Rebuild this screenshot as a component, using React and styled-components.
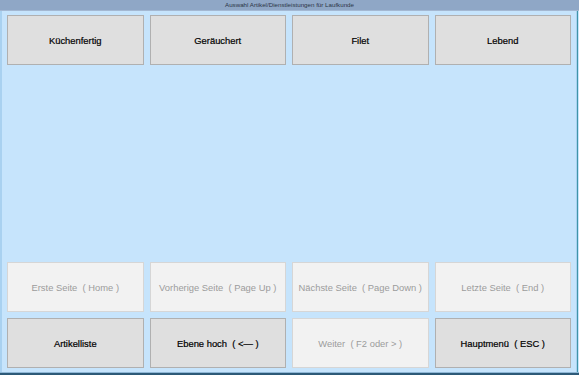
import React from "react";
import styled, { createGlobalStyle } from "styled-components";

const GlobalStyle = createGlobalStyle`
  html, body {
    margin: 0;
    padding: 0;
    background: #c6e4fc;
  }
`;

const topItems = ["Küchenfertig", "Geräuchert", "Filet", "Lebend"];

const pageItems = [
  { label: "Erste Seite  ( Home )", disabled: true },
  { label: "Vorherige Seite  ( Page Up )", disabled: true },
  { label: "Nächste Seite  ( Page Down )", disabled: true },
  { label: "Letzte Seite  ( End )", disabled: true },
  { label: "Artikelliste" },
  { label: "Ebene hoch  ( <— )" },
  { label: "Weiter  ( F2 oder > )", disabled: true },
  { label: "Hauptmenü  ( ESC )" },
];

const App = () => {
  return (
    <>
      <GlobalStyle />
      <Window>
        <TitleBar>Auswahl Artikel/Dienstleistungen für Laufkunde</TitleBar>
        <Body>
          <ButtonGrid>
            {topItems.map((item) => (
              <TileButton key={item}>{item}</TileButton>
            ))}
          </ButtonGrid>
          <ButtonGrid>
            {pageItems.map((item) => (
              <TileButton key={item.label} $disabled={item.disabled}>
                {item.label}
              </TileButton>
            ))}
          </ButtonGrid>
        </Body>
        <BottomEdge />
      </Window>
    </>
  );
};

export default App;

const Window = styled.div`
  width: 579px;
  height: 375px;
  display: flex;
  flex-direction: column;
  background: #c6e4fc;
  font-family: "Liberation Sans", Arial, sans-serif;
`;

const TitleBar = styled.div`
  height: 10px;
  background: #8fa7c6;
  border-bottom: 1px solid #a4b8d2;
  color: #2c3646;
  font-size: 6.2px;
  line-height: 10px;
  text-align: center;
  white-space: nowrap;
`;

const Body = styled.div`
  flex: 1;
  display: flex;
  flex-direction: column;
  justify-content: space-between;
  padding: 4px 4px 4px 5px;
  border-left: 2px solid #a9d1f0;
  border-right: 1px solid #3f95a8;
  box-shadow: inset -1px 0 0 #a9d1f0;
  margin-right: 1px;
  background: #c6e4fc;
`;

const BottomEdge = styled.div`
  height: 2px;
  background: #2d5a78;
  border-top: 1px solid #8fb7d6;
`;

const ButtonGrid = styled.div`
  display: grid;
  grid-template-columns: repeat(4, 1fr);
  grid-auto-rows: 50px;
  gap: 6px;
  padding-right: 2px;
`;

const TileButton = styled.button`
  margin: 0;
  padding: 0;
  border: 1px solid ${(p) => (p.$disabled ? "#d6d6d6" : "#b0b0b0")};
  background: ${(p) => (p.$disabled ? "#f2f2f2" : "#dfdfdf")};
  color: ${(p) => (p.$disabled ? "#9c9c9c" : "#000000")};
  font-family: "Liberation Sans", Arial, sans-serif;
  font-size: 9.4px;
  white-space: pre;
  display: flex;
  align-items: center;
  justify-content: center;
  -webkit-text-stroke: ${(p) => (p.$disabled ? "0" : "0.2px")};
`;
